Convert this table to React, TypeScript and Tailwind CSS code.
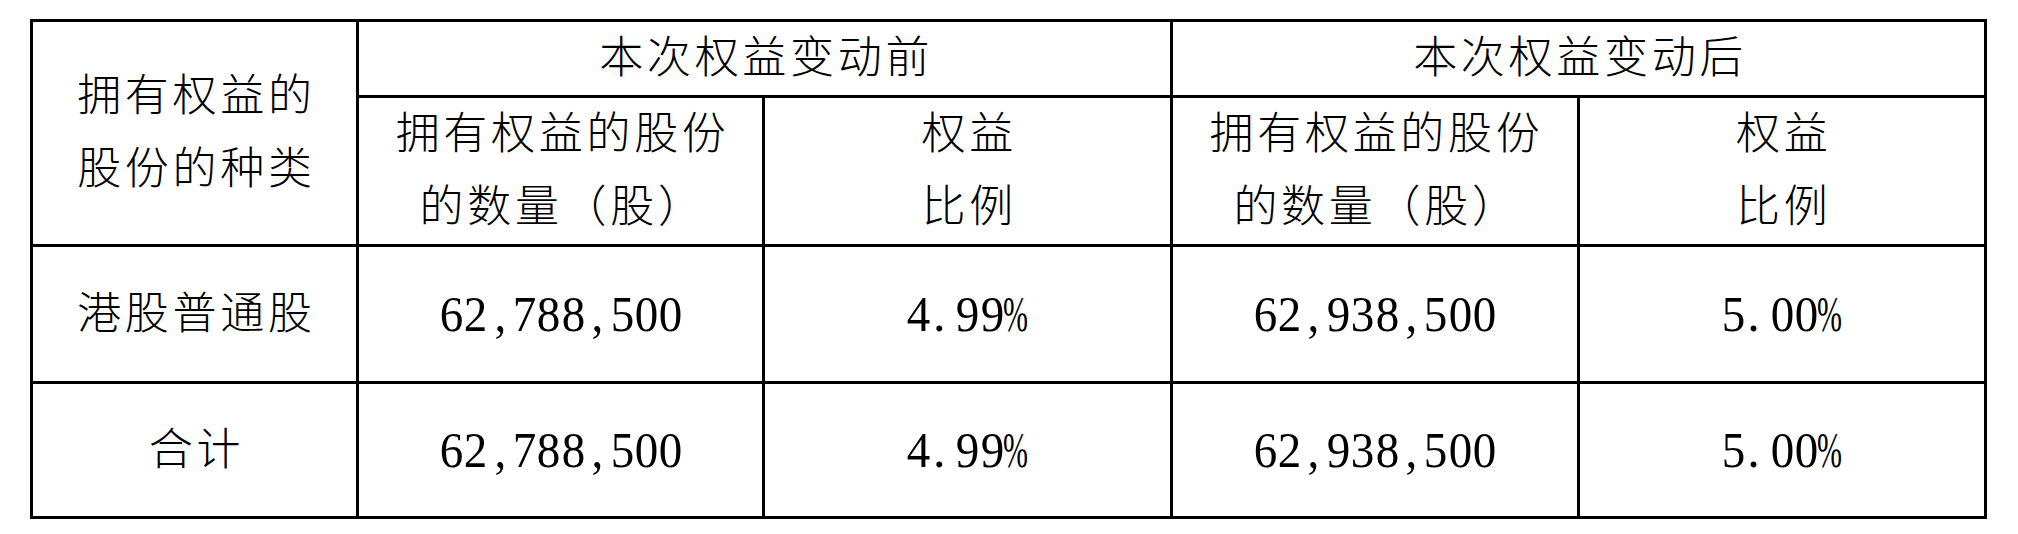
import React from "react";

const cjk = "font-['Liberation_Serif','Noto_Sans_CJK_SC',serif]";

function Num({ text }: { text: string }) {
  return (
    <span className="inline-flex font-['Liberation_Serif',serif] text-[50px] leading-none text-black">
      {text.split("").map((c, i) => {
        if (c === ".") {
          return (
            <span key={i} className="inline-block w-[24.4px] text-left pl-[2px]">
              .
            </span>
          );
        }
        if (c === "%") {
          return (
            <span key={i} className="inline-block w-[24.4px] text-left">
              <span className="inline-block origin-left scale-x-[0.6] -ml-[1px]">%</span>
            </span>
          );
        }
        return (
          <span key={i} className="inline-block w-[24.4px] text-center">
            <span className="inline-block scale-x-[0.94]">{c}</span>
          </span>
        );
      })}
    </span>
  );
}

function Zh({ lines }: { lines: string[] }) {
  return (
    <div className={`${cjk} font-light text-[44px] leading-[73px] tracking-[3.7px] pl-[3.7px] text-black`}>
      {lines.map((l, i) => (
        <div key={i}>{l}</div>
      ))}
    </div>
  );
}

const td = "border-[3px] border-black text-center align-middle p-0";

export default function App() {
  return (
    <div className="w-[2018px] h-[534px] bg-white pt-[19px] pl-[30px]">
      <table className="table-fixed border-collapse w-[1957px]">
        <colgroup>
          <col className="w-[326px]" />
          <col className="w-[406px]" />
          <col className="w-[407px]" />
          <col className="w-[407px]" />
          <col className="w-[407px]" />
        </colgroup>
        <tbody>
          <tr className="h-[74px]">
            <td rowSpan={2} className={td}>
              <Zh lines={["拥有权益的", "股份的种类"]} />
            </td>
            <td colSpan={2} className={td}>
              <Zh lines={["本次权益变动前"]} />
            </td>
            <td colSpan={2} className={td}>
              <Zh lines={["本次权益变动后"]} />
            </td>
          </tr>
          <tr className="h-[148px]">
            <td className={td}>
              <Zh lines={["拥有权益的股份", "的数量（股）"]} />
            </td>
            <td className={td}>
              <Zh lines={["权益", "比例"]} />
            </td>
            <td className={td}>
              <Zh lines={["拥有权益的股份", "的数量（股）"]} />
            </td>
            <td className={td}>
              <Zh lines={["权益", "比例"]} />
            </td>
          </tr>
          <tr className="h-[137px]">
            <td className={td}>
              <Zh lines={["港股普通股"]} />
            </td>
            <td className={td}>
              <Num text="62,788,500" />
            </td>
            <td className={td}>
              <Num text="4.99%" />
            </td>
            <td className={td}>
              <Num text="62,938,500" />
            </td>
            <td className={td}>
              <Num text="5.00%" />
            </td>
          </tr>
          <tr className="h-[135px]">
            <td className={td}>
              <Zh lines={["合计"]} />
            </td>
            <td className={td}>
              <Num text="62,788,500" />
            </td>
            <td className={td}>
              <Num text="4.99%" />
            </td>
            <td className={td}>
              <Num text="62,938,500" />
            </td>
            <td className={td}>
              <Num text="5.00%" />
            </td>
          </tr>
        </tbody>
      </table>
    </div>
  );
}
